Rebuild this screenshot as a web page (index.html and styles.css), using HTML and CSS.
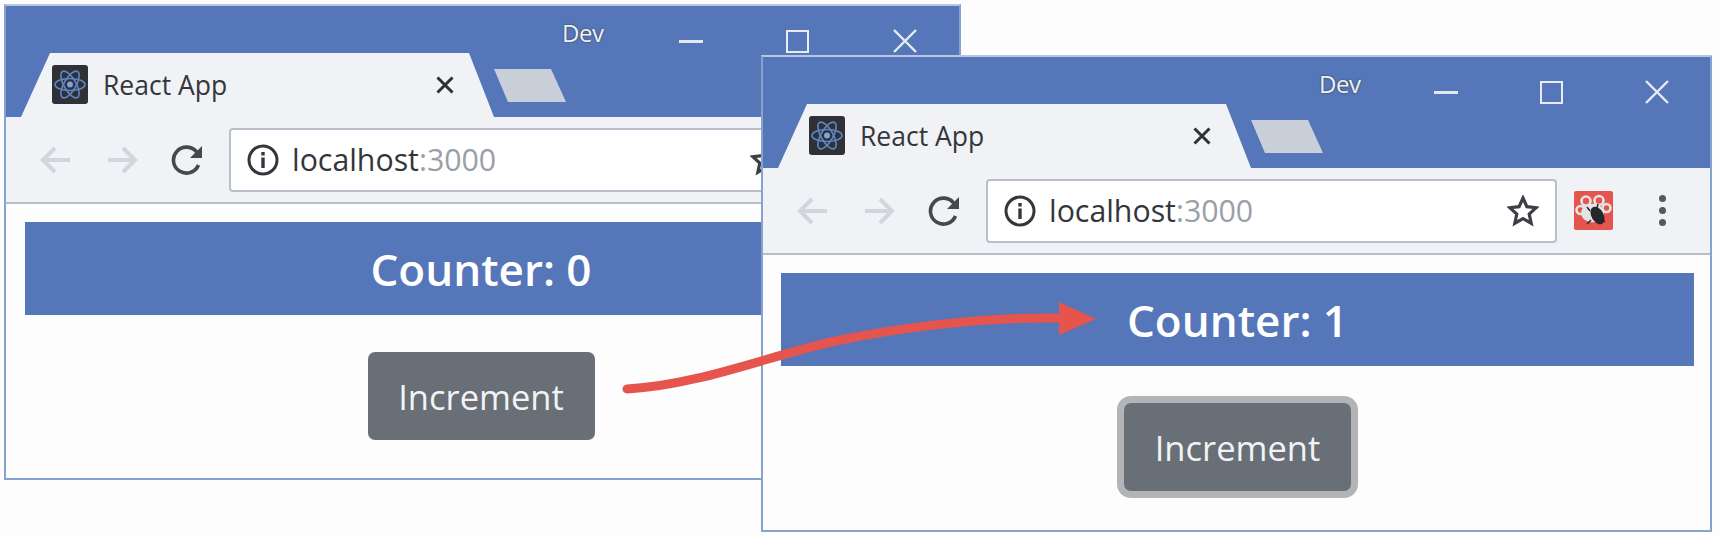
FILE: index.html
```html
<!DOCTYPE html>
<html lang="en">
<head>
  <meta charset="UTF-8" />
  <title>React App counter</title>
  <link rel="stylesheet" href="styles.css">
</head>
<body>
  <svg width="0" height="0" class="defs">
    <defs>
      <symbol id="atom" viewBox="0 0 36 39">
        <rect x="0" y="0" width="36" height="39" rx="3" fill="#2f3136" />
        <g fill="none" stroke="#5d86c6" stroke-width="1.6">
          <ellipse cx="18" cy="19.5" rx="15" ry="6" />
          <ellipse cx="18" cy="19.5" rx="15" ry="6" transform="rotate(60 18 19.5)" />
          <ellipse cx="18" cy="19.5" rx="15" ry="6" transform="rotate(120 18 19.5)" />
        </g>
        <circle cx="18" cy="19.5" r="3" fill="#7fa3dc" />
      </symbol>
      <symbol id="back" viewBox="0 0 32 32">
        <path d="M30 16H4M15 4 3 16l12 12" fill="none" stroke="#d0d5de" stroke-width="4" />
      </symbol>
      <symbol id="forward" viewBox="0 0 32 32">
        <path d="M2 16h26M17 4l12 12-12 12" fill="none" stroke="#d0d5de" stroke-width="4" />
      </symbol>
      <symbol id="reload" viewBox="0 0 34 34">
        <path d="M27.5 22a13 13 0 1 1-1.5-12.500" fill="none" stroke="#45484d" stroke-width="3.6" />
        <path d="M31 3v12H19z" fill="#45484d" />
      </symbol>
      <symbol id="info" viewBox="0 0 32 32">
        <circle cx="16" cy="16" r="14" fill="none" stroke="#33363b" stroke-width="3" />
        <path d="M14.300 13.500h3.400V24h-3.400zM14.300 8h3.400v3.400h-3.400z" fill="#33363b" />
      </symbol>
      <symbol id="star" viewBox="0 0 32 32">
        <path d="m16 3 3.900 8.700 9.300 1-7 6.300 2 9.300L16 23.500l-8.200 4.800 2-9.300-7-6.300 9.300-1z" fill="#fff" stroke="#3c3f44" stroke-width="3.200" />
      </symbol>
      <symbol id="bug" viewBox="0 0 39 39">
        <rect width="39" height="39" rx="2" fill="#e5544d" />
        <g fill="#e5544d" stroke="#e4e4e6" stroke-width="2.600">
          <circle cx="6.500" cy="19" r="4" />
          <circle cx="12" cy="10" r="4.500" />
          <circle cx="25" cy="9.500" r="4.500" />
          <circle cx="32.500" cy="17" r="4" />
          <ellipse cx="18.500" cy="22" rx="10" ry="8" fill="#e4e4e6" />
        </g>
        <ellipse cx="23.500" cy="24.500" rx="6" ry="9.500" transform="rotate(-30 23.500 24.500)" fill="#26272b" />
        <path d="m13 16 3 4M24 13l-1 4M13 33l4-4M31 31l-3-2" stroke="#26272b" stroke-width="1.500" />
      </symbol>
    </defs>
  </svg>

  <div class="desktop">
    <div class="window window-first">
      <div class="caption">
        <span class="caption-label">Dev</span>
        <span class="caption-btn"><i class="min-icon"></i></span>
        <span class="caption-btn"><i class="max-icon"></i></span>
        <span class="caption-btn close-icon">
          <svg width="26" height="26" viewBox="0 0 26 26"><path d="m2 2 22 22M24 2 2 24" stroke="#e8ecf4" stroke-width="2.400" /></svg>
        </span>
      </div>
      <div class="tabstrip">
        <div class="tab">
          <svg class="favicon" width="36" height="39"><use href="#atom" /></svg>
          <span class="tab-title">React App</span>
          <svg class="tab-close" width="20" height="20" viewBox="0 0 20 20"><path d="m2.500 2.500 15 15M17.500 2.500l-15 15" stroke="#2f3136" stroke-width="3" /></svg>
        </div>
        <div class="newtab"></div>
      </div>
      <div class="toolbar">
        <svg class="tool" width="32" height="32"><use href="#back" /></svg>
        <svg class="tool" width="32" height="32"><use href="#forward" /></svg>
        <svg class="tool" width="34" height="34"><use href="#reload" /></svg>
        <div class="omnibox">
          <svg class="info" width="32" height="32"><use href="#info" /></svg>
          <span class="host">localhost<span class="port">:3000</span></span>
          <svg class="star" width="32" height="32"><use href="#star" /></svg>
        </div>
        <svg class="ext" width="39" height="39"><use href="#bug" /></svg>
        <div class="dots"><i></i><i></i><i></i></div>
      </div>
      <div class="content">
        <div class="counter">Counter: 0</div>
        <button class="increment">Increment</button>
      </div>
    </div>

    <div class="window window-second">
      <div class="caption">
        <span class="caption-label">Dev</span>
        <span class="caption-btn"><i class="min-icon"></i></span>
        <span class="caption-btn"><i class="max-icon"></i></span>
        <span class="caption-btn close-icon">
          <svg width="26" height="26" viewBox="0 0 26 26"><path d="m2 2 22 22M24 2 2 24" stroke="#e8ecf4" stroke-width="2.400" /></svg>
        </span>
      </div>
      <div class="tabstrip">
        <div class="tab">
          <svg class="favicon" width="36" height="39"><use href="#atom" /></svg>
          <span class="tab-title">React App</span>
          <svg class="tab-close" width="20" height="20" viewBox="0 0 20 20"><path d="m2.500 2.500 15 15M17.500 2.500l-15 15" stroke="#2f3136" stroke-width="3" /></svg>
        </div>
        <div class="newtab"></div>
      </div>
      <div class="toolbar">
        <svg class="tool" width="32" height="32"><use href="#back" /></svg>
        <svg class="tool" width="32" height="32"><use href="#forward" /></svg>
        <svg class="tool" width="34" height="34"><use href="#reload" /></svg>
        <div class="omnibox">
          <svg class="info" width="32" height="32"><use href="#info" /></svg>
          <span class="host">localhost<span class="port">:3000</span></span>
          <svg class="star" width="32" height="32"><use href="#star" /></svg>
        </div>
        <svg class="ext" width="39" height="39"><use href="#bug" /></svg>
        <div class="dots"><i></i><i></i><i></i></div>
      </div>
      <div class="content">
        <div class="counter">Counter: 1</div>
        <button class="increment focused">Increment</button>
      </div>
    </div>

    <svg class="arrow" width="1720" height="535" viewBox="0 0 1720 535">
      <path d="M627 389C700 385 770 355 840 340C930 322 1000 317 1066 318" fill="none" stroke="#e5544d" stroke-width="9" stroke-linecap="round" />
      <path d="M1059 302 1096 319 1059 335z" fill="#e5544d" />
    </svg>
  </div>
</body>
</html>
```

FILE: styles.css
```css
body {
  margin: 0;
  background: #fdfdfd;
  font-family: 'Open Sans', 'Noto Sans', sans-serif;
  overflow: hidden;
}
.defs {
  position: absolute;
}
.desktop {
  position: relative;
  width: 1720px;
  height: 535px;
}
.window {
  position: absolute;
  display: flex;
  flex-direction: column;
  box-sizing: border-box;
  background: #fdfdfd;
  border: 2px solid #86a3d0;
  border-top-color: #b9c6de;
}
.window-first {
  left: 4px;
  top: 4px;
  width: 957px;
  height: 476px;
}
.window-second {
  left: 761px;
  top: 55px;
  width: 951px;
  height: 477px;
}
.caption {
  display: flex;
  align-items: center;
  box-sizing: border-box;
  height: 47px;
  padding: 23px 0 0 556px;
  background: #5576b8;
}
.caption-label {
  width: 75px;
  margin-top: -18px;
  color: #eef1f6;
  font-size: 24px;
  letter-spacing: -0.5px;
  text-shadow: 0 0 2px #333;
}
.caption-btn {
  display: flex;
  justify-content: center;
  align-items: center;
  width: 107px;
  height: 28px;
}
.min-icon {
  width: 24px;
  height: 3px;
  margin-top: 1px;
  background: #e3e7f0;
}
.max-icon {
  box-sizing: border-box;
  width: 23px;
  height: 23px;
  border: 2.5px solid #e8ecf4;
}
.tabstrip {
  display: flex;
  height: 64px;
  padding-left: 15px;
  background: #5576b8;
}
.tab {
  display: flex;
  align-items: center;
  box-sizing: border-box;
  width: 473px;
  height: 64px;
  padding: 0 0 1px 31px;
  background: #f1f2f5;
  clip-path: polygon(0 100%, 29px 0, 448px 0, 473px 100%);
}
.favicon {
  flex: none;
}
.tab-title {
  margin-left: 15px;
  color: #33363b;
  font-size: 26.5px;
}
.tab-close {
  margin-left: auto;
  margin-right: 39px;
}
.newtab {
  width: 72px;
  height: 33px;
  margin: 16px 0 0 0;
  background: #c9cfd8;
  clip-path: polygon(0 0, 57px 0, 72px 100%, 14px 100%);
}
.toolbar {
  display: flex;
  align-items: center;
  box-sizing: border-box;
  height: 87px;
  padding-left: 34px;
  background: #f1f2f5;
  border-bottom: 2px solid #b9bfca;
}
.tool {
  flex: none;
  margin-right: 34px;
}
.tool:nth-child(3) {
  margin-right: 0;
  margin-left: -1px;
}
.omnibox {
  display: flex;
  flex: none;
  align-items: center;
  box-sizing: border-box;
  width: 571px;
  height: 64px;
  margin-left: 24px;
  padding: 0 16px 0 16px;
  background: #fff;
  border: 2px solid #b9bfca;
  border-radius: 4px;
}
.host {
  margin-left: 13px;
  color: #33363b;
  font-size: 30.3px;
}
.port {
  color: #9a9fa8;
}
.star {
  margin-left: auto;
}
.ext {
  flex: none;
  margin-left: 17px;
}
.dots {
  display: flex;
  flex-direction: column;
  gap: 5px;
  margin-left: 46px;
}
.dots i {
  width: 7px;
  height: 7px;
  border-radius: 50%;
  background: #55585e;
}
.content {
  display: flex;
  flex-direction: column;
  align-items: center;
  padding: 18px 16px 0 18px;
}
.window-first .content {
  padding: 18px 22px 0 19px;
}
.counter {
  align-self: stretch;
  height: 93px;
  background: #5576b8;
  color: #fff;
  font-size: 44px;
  font-weight: 600;
  line-height: 95px;
  text-align: center;
}
.increment {
  width: 227px;
  height: 88px;
  margin-top: 37px;
  padding: 0;
  background: #686f76;
  border: none;
  border-radius: 7px;
  color: #f2f3f5;
  font-family: inherit;
  font-size: 34.5px;
}
.focused {
  box-shadow: 0 0 0 7px #b3b4b8;
}
.arrow {
  position: absolute;
  left: 0;
  top: 0;
}
```
